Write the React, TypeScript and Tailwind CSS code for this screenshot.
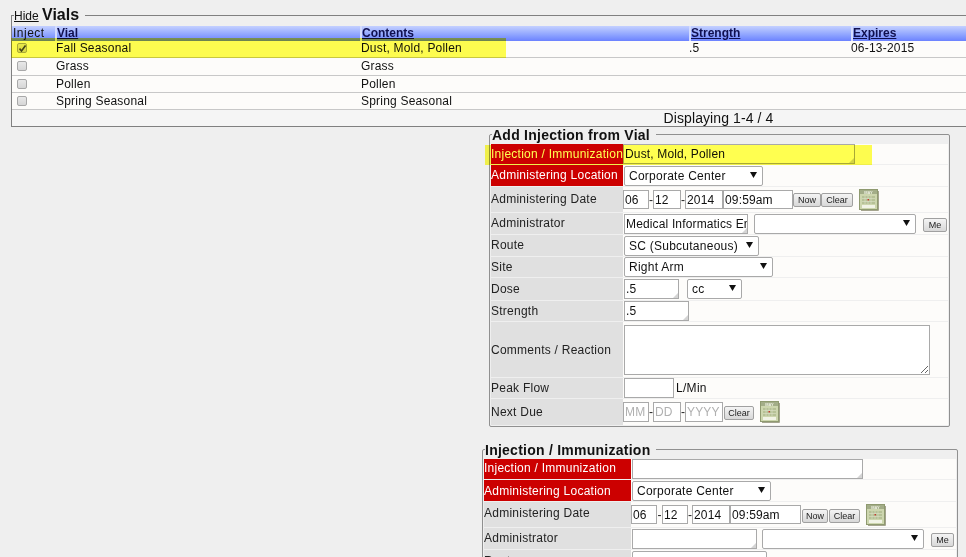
import React from "react";

const Grip = () => (
  <svg className="absolute right-[1px] bottom-[1px]" width="5" height="5" viewBox="0 0 5 5">
    <path d="M5 0V5H0Z" fill="#d4d4d4" />
  </svg>
);

const Box = ({ value = "", w, h = 20, grip = false, muted = false }: { value?: string; w: number; h?: number; grip?: boolean; muted?: boolean }) => (
  <span className="relative inline-block shrink-0" style={{ width: w, height: h }}>
    <input
      readOnly
      value={muted ? "" : value}
      placeholder={muted ? value : undefined}
      className="h-full w-full border border-[#a9a9a9] bg-white pl-[1px] text-[12px] tracking-[0.15px] text-[#111] outline-none placeholder:text-[#b0b0b0]"
    />
    {grip && <Grip />}
  </span>
);

const Select = ({ value, w }: { value: string; w: number }) => (
  <span className="relative inline-block h-[20px] shrink-0" style={{ width: w }}>
    <select className="h-full w-full appearance-none rounded-[2px] border border-[#a9a9a9] bg-white pl-[4px] text-[12px] tracking-[0.25px] text-[#111] outline-none">
      <option>{value}</option>
    </select>
    <svg className="absolute top-[6px] right-[6px]" width="7" height="6" viewBox="0 0 7 6">
      <path d="M0 0H7L3.5 6Z" fill="#111" />
    </svg>
  </span>
);

const Btn = ({ label, w }: { label: string; w: number }) => (
  <button className="h-[14px] shrink-0 rounded-[2px] border border-[#a0a0a0] bg-gradient-to-b from-[#f4f4f4] to-[#d8d8d8] text-[9px] leading-[12px] text-[#222]" style={{ width: w }}>
    {label}
  </button>
);

const Calendar = () => (
  <svg className="shrink-0" width="20" height="22" viewBox="0 0 20 22">
    <rect x="0.5" y="0.5" width="18" height="20" fill="#cdd6ae" stroke="#8f9a70" />
    <rect x="1" y="1" width="17" height="4" fill="#a3ad88" />
    <text x="9.5" y="4.6" fontSize="4" fontWeight="700" textAnchor="middle" fill="#f0f2e4" fontFamily="Liberation Sans, sans-serif">MAY</text>
    <rect x="3" y="7" width="13" height="8" fill="#b6c196" />
    <path d="M3 9.5H16M3 12.5H16M6 7V15M9 7V15M12 7V15" stroke="#dde3ca" strokeWidth="0.6" />
    <rect x="8.5" y="10" width="1.5" height="1.5" fill="#c2392f" />
    <rect x="3" y="16" width="13" height="3" fill="#f1f3e6" />
    <path d="M19.5 2V21.5H2" fill="none" stroke="#a4a48e" />
  </svg>
);

const Row = ({ label, h, req = false, gap = true, up = 0, labelW, children }: { label: string; h: number; req?: boolean; gap?: boolean; up?: number; labelW: number; children: React.ReactNode }) => (
  <div className={`flex ${gap ? "border-b border-[#efefef]" : ""}`} style={{ height: h }}>
    <div className={`flex shrink-0 items-center text-[12px] tracking-[0.25px] whitespace-nowrap ${req ? "bg-[#cc0000] text-white" : "bg-[#e0e0e0] text-[#222]"}`} style={{ width: labelW, paddingBottom: up }}>
      {label}
    </div>
    <div className="flex flex-1 items-center bg-[#fdfcfa]">{children}</div>
  </div>
);

const Dash = ({ w = 4 }: { w?: number }) => (
  <span className="flex shrink-0 justify-center text-[12px] text-[#222]" style={{ width: w }}>-</span>
);

const Check = ({ on = false }: { on?: boolean }) => (
  <span className="relative ml-[5px] block h-[10px] w-[10px] rounded-[2px] border border-[#a8a8a8] bg-gradient-to-b from-[#e8e8e8] to-[#d6d6d6]">
    {on && (
      <svg className="absolute top-[1px] left-[1px]" width="7" height="7" viewBox="0 0 7 7">
        <path d="M0.5 3.5L2.5 6L6.5 0.5" fill="none" stroke="#444" strokeWidth="1.6" />
      </svg>
    )}
  </span>
);

const vials = [
  { name: "Fall Seasonal", contents: "Dust, Mold, Pollen", strength: ".5", expires: "06-13-2015", on: true, h: 17, pad: 2 },
  { name: "Grass", contents: "Grass", strength: "", expires: "", h: 18, pad: 1 },
  { name: "Pollen", contents: "Pollen", strength: "", expires: "", h: 17, pad: 1 },
  { name: "Spring Seasonal", contents: "Spring Seasonal", strength: "", expires: "", h: 17, pad: 1 },
];

const cols = "grid grid-cols-[43px_305px_329px_162px_1fr]";

export default function App() {
  return (
    <div className="relative h-[557px] w-[966px] overflow-hidden bg-[#efefef] pt-[6px] font-['Liberation_Sans',Arial,sans-serif] text-[12px] text-[#111]">
      <fieldset className="ml-[11px] w-[1415px] border border-[#808080] pt-[1px]">
        <legend className="ml-[2px] pr-[6px] leading-[18px]">
          <a className="text-[12px] underline">Hide</a> <span className="text-[16px] font-bold">Vials</span>
        </legend>
        <div className={`${cols} h-[15px] bg-gradient-to-b from-[#c4d0ff] to-[#6c82ff] text-[12px] leading-[15px] font-bold`}>
          <div className="pl-[1px] font-normal tracking-[0.5px]">Inject</div>
          {["Vial", "Contents", "Strength", "Expires"].map((h) => (
            <div key={h} className="border-l-2 border-[#d4dcff] text-[#101050] underline">{h}</div>
          ))}
        </div>
        {vials.map((v) => (
          <div key={v.name} className={`${cols} items-center border-b border-[#c8c8c8] bg-[#fdfcfa] leading-[14px] tracking-[0.2px]`} style={{ height: v.h, paddingBottom: v.pad }}>
            <Check on={v.on} />
            <div className="pl-[1px]">{v.name}</div>
            <div className="pl-[1px]">{v.contents}</div>
            <div>{v.strength}</div>
            <div>{v.expires}</div>
          </div>
        ))}
        <div className="h-[16px] w-full bg-[#f5f5f5] text-center text-[14px] leading-[16px] tracking-[0.1px]">Displaying 1-4 / 4</div>
      </fieldset>

      <fieldset className="-mt-px ml-[489px] w-[461px] rounded-[2px] border border-[#909090] px-[1px] pt-[2px] pb-[1px]">
        <legend className="ml-[1px] h-[16px] pr-[6px] text-[14px] leading-[18px] font-bold tracking-[0.25px] text-[#111]">Add Injection from Vial</legend>
        <Row label="Injection / Immunization" h={21} req labelW={132}><Box value="Dust, Mold, Pollen" w={232} grip /></Row>
        <Row label="Administering Location" h={22} req up={2} labelW={132}><span className="ml-[1px]"><Select value="Corporate Center" w={139} /></span></Row>
        <Row label="Administering Date" h={26} up={2} labelW={132}>
          <Box value="06" w={26} h={19} /><Dash /><Box value="12" w={28} h={19} /><Dash /><Box value="2014" w={38} h={19} /><Box value="09:59am" w={70} h={19} />
          <Btn label="Now" w={28} /><Btn label="Clear" w={32} />
          <span className="ml-[6px]"><Calendar /></span>
        </Row>
        <Row label="Administrator" h={22} up={2} labelW={132}>
          <span className="ml-[1px]"><Box value="Medical Informatics En" w={124} grip /></span>
          <span className="ml-[6px]"><Select value="" w={162} /></span>
          <span className="ml-[7px]"><Btn label="Me" w={24} /></span>
        </Row>
        <Row label="Route" h={22} up={2} labelW={132}><span className="ml-[1px]"><Select value="SC (Subcutaneous)" w={135} /></span></Row>
        <Row label="Site" h={21} labelW={132}><span className="ml-[1px]"><Select value="Right Arm" w={149} /></span></Row>
        <Row label="Dose" h={23} labelW={132}>
          <span className="ml-[1px]"><Box value=".5" w={55} grip /></span>
          <span className="ml-[8px]"><Select value="cc" w={55} /></span>
        </Row>
        <Row label="Strength" h={21} labelW={132}><span className="ml-[1px]"><Box value=".5" w={65} grip /></span></Row>
        <Row label="Comments / Reaction" h={56} labelW={132}>
          <textarea readOnly className="ml-[1px] h-[50px] w-[306px] border border-[#a9a9a9] bg-white outline-none" />
        </Row>
        <Row label="Peak Flow" h={21} labelW={132}>
          <span className="ml-[1px]"><Box w={50} /></span><span className="ml-[2px] tracking-[0.3px]">L/Min</span>
        </Row>
        <Row label="Next Due" h={26} gap={false} labelW={132}>
          <Box value="MM" w={26} muted /><Dash /><Box value="DD" w={28} muted /><Dash /><Box value="YYYY" w={38} muted />
          <span className="ml-[1px]"><Btn label="Clear" w={30} /></span>
          <span className="ml-[6px]"><Calendar /></span>
        </Row>
      </fieldset>

      <fieldset className="mt-[14px] ml-[482px] w-[476px] rounded-[2px] border border-[#909090] px-[1px] pt-[2px]">
        <legend className="ml-[1px] h-[16px] pr-[6px] text-[14px] leading-[18px] font-bold tracking-[0.25px] text-[#111]">Injection / Immunization</legend>
        <Row label="Injection / Immunization" h={21} req up={2} labelW={147}><span className="ml-[1px]"><Box w={231} grip /></span></Row>
        <Row label="Administering Location" h={22} req labelW={147}><span className="ml-[1px]"><Select value="Corporate Center" w={139} /></span></Row>
        <Row label="Administering Date" h={26} up={3} labelW={147}>
          <Box value="06" w={26} h={19} /><Dash w={5} /><Box value="12" w={26} h={19} /><Dash /><Box value="2014" w={38} h={19} /><Box value="09:59am" w={71} h={19} />
          <span className="ml-[1px]"><Btn label="Now" w={26} /></span><span className="ml-[1px]"><Btn label="Clear" w={31} /></span>
          <span className="ml-[6px]"><Calendar /></span>
        </Row>
        <Row label="Administrator" h={22} up={2} labelW={147}>
          <span className="ml-[1px]"><Box w={125} grip /></span>
          <span className="ml-[5px]"><Select value="" w={162} /></span>
          <span className="ml-[7px]"><Btn label="Me" w={23} /></span>
        </Row>
        <Row label="Route" h={22} gap={false} labelW={147}><span className="ml-[1px]"><Select value="" w={135} /></span></Row>
      </fieldset>

      {/* marker highlights over the page */}
      <div className="absolute top-[38px] left-[11px] h-[20px] w-[495px] bg-[#ffff50] mix-blend-multiply" />
      <div className="absolute top-[145px] left-[485px] h-[20px] w-[387px] bg-[#ffff50] mix-blend-multiply" />
    </div>
  );
}
